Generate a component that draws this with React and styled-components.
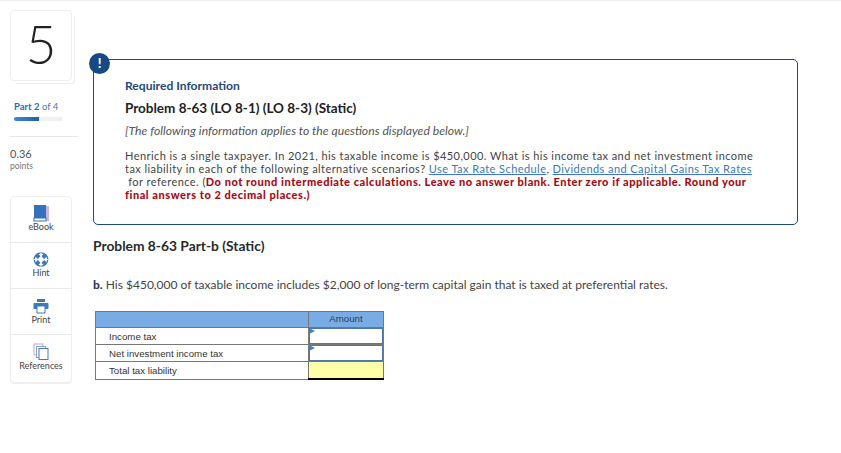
import React from "react";
import styled, { createGlobalStyle } from "styled-components";

const Global = createGlobalStyle`
  html, body { margin: 0; padding: 0; background: #fff; }
  body { font-family: Lato, "Liberation Sans", sans-serif; color: #333; overflow: hidden; }
`;
const Page = styled.div`
  width: 841px; height: 453px; box-sizing: border-box; border-top: 1px solid #eee;
  display: flex; align-items: flex-start; padding: 9px 0 0 10px;
`;
const Side = styled.aside`width: 62px; display: flex; flex-direction: column; margin-right: 21px;`;
const NumCard = styled.div`
  width: 62px; height: 71px; box-sizing: border-box; border: 1px solid #eee; border-radius: 4px; padding-bottom: 5px;
  box-shadow: 3px 3px 0 -1px #fff, 4px 4px 0 -1px #eee;
  display: flex; align-items: center; justify-content: center;
  font-size: 53px; line-height: 1; color: #222; font-weight: 300;
`;
const Part = styled.div`
  margin: 20px 0 0 4px; font-size: 9.5px; line-height: 12px; color: #3a78c2; white-space: nowrap;
  b { font-weight: 700; color: #2a6cb8; }
`;
const Track = styled.div`
  margin: 4px 0 0 4px; width: 49px; height: 4px; border-radius: 2px; background: #f0f0f0; overflow: hidden;
`;
const Fill = styled.div`height: 100%; background: linear-gradient(90deg, #3f8ad8, #1f5fa6);`;
const Rule = styled.div`margin-top: 15px; width: 68px; height: 1px; background: #e6e6e6;`;
const Score = styled.div`margin-top: 10px; font-size: 11px; line-height: 13px; color: #555;`;
const Points = styled.div`font-size: 8.5px; line-height: 13px; color: #777;`;
const Tools = styled.div`
  margin-top: 23px; width: 62px; border: 1px solid #eee; border-radius: 4px; box-sizing: border-box;
  box-shadow: 0 1px 1px #eee;
`;
const Tool = styled.div`
  height: ${p => p.$h}px; box-sizing: border-box; border-bottom: 1px solid ${p => p.$last ? "transparent" : "#e8e8e8"};
  display: flex; flex-direction: column; align-items: center; padding-top: 8px;
  font-size: 9px; line-height: 10px; color: #444;
  svg { display: block; margin-bottom: 0; }
`;
const Main = styled.main`width: 705px; display: flex; flex-direction: column; margin-top: 49px;`;
const Alert = styled.section`
  position: relative; height: 166px; box-sizing: border-box; border: 1px solid #1c4a80; border-radius: 5px;
  padding: 19px 31px 0;
`;
const Badge = styled.div`
  position: absolute; left: -5px; top: -7px; width: 21px; height: 21px; border-radius: 50%;
  background: #174a83; color: #fff; font-weight: 900; font-size: 13px; line-height: 20px; text-align: center;
`;
const Req = styled.div`font-size: 12.1px; line-height: 14.6px; font-weight: 700; color: #1d4a7c;`;
const Title = styled.h2`margin: 6px 0 0; font-size: 13.5px; line-height: 16.2px; font-weight: 700; color: #222;`;
const Note = styled.p`margin: 8px 0 0; font-size: 12.2px; line-height: 14.7px; font-style: italic; color: #555;`;
const Body = styled.p`margin: 10px 0 0; font-size: 11px; line-height: 13.2px; letter-spacing: 0.435px; color: #444; white-space: nowrap;`;
const Link = styled.a`color: #3d78b8; text-decoration: underline;`;
const Red = styled.b`color: #a80b14; font-weight: 900; letter-spacing: 0.54px;`;
const Heading = styled.h3`margin: 13px 0 0; font-size: 13.8px; line-height: 16.6px; font-weight: 700; color: #2a2a2a;`;
const Sub = styled.p`margin: 23px 0 0; font-size: 12px; line-height: 14.4px; color: #444; b { font-weight: 900; color: #2a3f5a; }`;
const Sheet = styled.table`
  margin: 19px 0 0 2px; width: 288px; border-collapse: collapse; table-layout: fixed;
  font-family: "Liberation Sans", Arial, sans-serif; font-size: 9.7px; color: #333;
`;
const Th = styled.th`height: 16px; padding: 0 0 2px; box-sizing: border-box; background: #79ace4; border: 1px solid #777; font-weight: 400; text-align: center; color: #2f3d52;`;
const Label = styled.td`height: 16px; padding: 2px 0 0 13px; box-sizing: border-box; border: 1px solid #777; line-height: 1;`;
const Input = styled.td`
  position: relative; padding: 0; height: 16px; border: 1px solid #777;
  box-shadow: inset 0 0 0 1px #4f77a8;
  &::before { content: ""; position: absolute; left: 0; top: 0; border-left: 6px solid #3f7fc8; border-top: 3px solid transparent; border-bottom: 3px solid transparent; }
`;
const Total = styled.td`height: 16px; padding: 0; background: #ffffa8; border: 1px solid #777; border-top: 1px solid #111; border-bottom: 2px solid #000;`;

const Book = () => (
  <svg width="16" height="17" viewBox="0 0 16 17">
    <rect x="3" y="1" width="13" height="15" fill="#c9b6e2" />
    <rect x="1" y="0" width="12" height="13" fill="#3572bb" />
    <rect x="1" y="13" width="12" height="3" fill="#fff" stroke="#3572bb" strokeWidth="1" />
  </svg>
);
const Buoy = () => (
  <svg width="16" height="17" viewBox="0 0 16 16">
    <circle cx="8" cy="8" r="6.7" fill="#fff" stroke="#3f78bd" strokeWidth="1.3" />
    <path d="M3.2 3.2l3 3M12.8 3.2l-3 3M3.2 12.8l3-3M12.8 12.8l-3-3" stroke="#3f78bd" strokeWidth="4" />
    <path d="M8 1v14M1 8h14" stroke="#fff" strokeWidth="1" />
  </svg>
);
const Printer = () => (
  <svg width="16" height="18" viewBox="0 0 16 18">
    <rect x="4" y="2" width="8" height="3" fill="#3f78bd" />
    <rect x="0.5" y="6" width="15" height="6" rx="1" fill="#3f78bd" />
    <rect x="4" y="9" width="8" height="7" fill="#fff" stroke="#3f78bd" />
  </svg>
);
const Pages = () => (
  <svg width="16" height="18" viewBox="0 0 16 18">
    <rect x="1" y="1" width="9" height="11" fill="#fff" stroke="#b9a8dc" />
    <rect x="3.5" y="3.5" width="9" height="11" fill="#fff" stroke="#8aa0d8" />
    <rect x="6" y="5.5" width="9" height="11" fill="#fff" stroke="#4a78b8" />
  </svg>
);

export default function App() {
  return (
    <>
      <Global />
      <Page>
        <Side>
          <NumCard>5</NumCard>
          <Part><b>Part 2</b> of 4</Part>
          <Track><Fill style={{ width: "50%" }} /></Track>
          <Rule />
          <Score>0.36</Score>
          <Points>points</Points>
          <Tools>
            <Tool $h={46}><Book />eBook</Tool>
            <Tool $h={46}><Buoy />Hint</Tool>
            <Tool $h={46}><Printer />Print</Tool>
            <Tool $h={47} $last><Pages />References</Tool>
          </Tools>
        </Side>
        <Main>
          <Alert>
            <Badge>!</Badge>
            <Req>Required Information</Req>
            <Title>Problem 8-63 (LO 8-1) (LO 8-3) (Static)</Title>
            <Note>[The following information applies to the questions displayed below.]</Note>
            <Body>
              Henrich is a single taxpayer. In 2021, his taxable income is $450,000. What is his income tax and net investment income<br />
              tax liability in each of the following alternative scenarios? <Link>Use Tax Rate Schedule</Link>, <Link>Dividends and Capital Gains Tax Rates</Link><br />
              &nbsp;for reference. (<Red>Do not round intermediate calculations. Leave no answer blank. Enter zero if applicable. Round your<br />
              final answers to 2 decimal places.)</Red>
            </Body>
          </Alert>
          <Heading>Problem 8-63 Part-b (Static)</Heading>
          <Sub><b>b.</b> His $450,000 of taxable income includes $2,000 of long-term capital gain that is taxed at preferential rates.</Sub>
          <Sheet>
            <colgroup><col style={{ width: 213 }} /><col style={{ width: 75 }} /></colgroup>
            <tbody>
              <tr><Th /><Th>Amount</Th></tr>
              <tr><Label>Income tax</Label><Input /></tr>
              <tr><Label>Net investment income tax</Label><Input /></tr>
              <tr><Label>Total tax liability</Label><Total /></tr>
            </tbody>
          </Sheet>
        </Main>
      </Page>
    </>
  );
}
